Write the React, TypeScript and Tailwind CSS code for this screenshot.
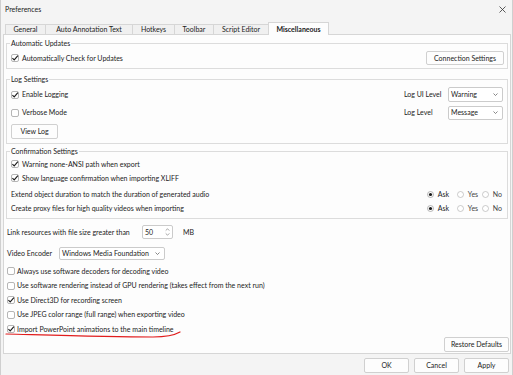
import React from "react";

function Check({ checked = false }: { checked?: boolean }) {
  return (
    <svg width="8" height="8" viewBox="0 0 8 8" className="shrink-0">
      <rect x="0.5" y="0.5" width="7" height="7" rx="1.5" fill="#ffffff" stroke="#a3a3a3" strokeWidth="0.8" />
      {checked && (
        <path d="M1.4 4.1 L3.2 5.9 L6.9 1.6" fill="none" stroke="#1c1c1c" strokeWidth="1.1" />
      )}
    </svg>
  );
}

function Radio({ on = false }: { on?: boolean }) {
  return (
    <svg width="7" height="7" viewBox="0 0 7 7" className="shrink-0">
      <circle cx="3.5" cy="3.5" r="3" fill="#ffffff" stroke={on ? "#9a9a9a" : "#b5b5b5"} strokeWidth="0.7" />
      {on && <circle cx="3.5" cy="3.5" r="1.6" fill="#1a1a1a" />}
    </svg>
  );
}

function Chevron() {
  return (
    <svg width="5" height="3" viewBox="0 0 5 3" className="shrink-0">
      <path d="M0.5 0.5 L2.5 2.5 L4.5 0.5" fill="none" stroke="#555" strokeWidth="0.7" />
    </svg>
  );
}

function Combo({ value, className }: { value: string; className: string }) {
  return (
    <div
      className={`flex items-center justify-between whitespace-nowrap rounded-[2px] border border-[#cbcbcb] bg-white pl-[2px] pr-[4px] ${className}`}
    >
      <span>{value}</span>
      <Chevron />
    </div>
  );
}

function Button({ label, className }: { label: string; className: string }) {
  return (
    <div
      className={`flex items-center justify-center whitespace-nowrap rounded-[2px] border border-[#d0d0d0] bg-[#fdfdfd] ${className}`}
    >
      {label}
    </div>
  );
}

function CheckRow({ label, checked }: { label: string; checked?: boolean }) {
  return (
    <div className="flex h-[14.5px] items-center gap-[2px] pl-[2px]">
      <Check checked={checked} />
      <span>{label}</span>
    </div>
  );
}

function Answer() {
  return (
    <div className="flex items-center">
      <div className="flex w-[30px] items-center gap-[4px]">
        <Radio on />
        <span>Ask</span>
      </div>
      <div className="flex w-[25px] items-center gap-[4px] text-[#444]">
        <Radio />
        <span>Yes</span>
      </div>
      <div className="flex items-center gap-[4px] text-[#444]">
        <Radio />
        <span>No</span>
      </div>
    </div>
  );
}

const tabs = [
  { label: "General", w: "w-[40px]" },
  { label: "Auto Annotation Text", w: "w-[87px]" },
  { label: "Hotkeys", w: "w-[42px]" },
  { label: "Toolbar", w: "w-[39px]" },
  { label: "Script Editor", w: "w-[55px]" },
];

export default function App() {
  return (
    <div className="relative flex h-[375px] w-[513px] flex-col overflow-hidden whitespace-nowrap border-x border-[#cfcfcf] bg-[#f4f4f4] font-[Lato,sans-serif] text-[7px] leading-none text-[#1b1b1b]">
      <div className="flex h-[19px] items-center justify-between pl-[4px] pr-[6px]">
        <span>Preferences</span>
        <svg width="7" height="7" viewBox="0 0 7 7">
          <path d="M0.5 0.5 L6.5 6.5 M6.5 0.5 L0.5 6.5" stroke="#333" strokeWidth="0.8" />
        </svg>
      </div>

      <div className="relative z-10 flex h-[15px] items-end pl-[4px]">
        {tabs.map((t) => (
          <div
            key={t.label}
            className={`flex h-[10px] items-center justify-center border-l border-t border-[#d6d6d6] bg-[#f0f0f0] ${t.w}`}
          >
            {t.label}
          </div>
        ))}
        <div className="-mb-px flex h-[13px] w-[61px] items-center justify-center border-x border-t border-[#d6d6d6] bg-[#fdfdfd] font-bold">
          Miscellaneous
        </div>
      </div>

      <div className="ml-[2px] mr-[1px] flex h-[320px] flex-col border border-[#d6d6d6] bg-[#fdfdfd]">
        <div className="flex flex-col px-[2px]">
          <fieldset className="mt-[3px] border border-[#dcdcdc] px-[4px] pb-[3px]">
            <legend className="-ml-[1px] px-[1px] leading-[10px]">Automatic Updates</legend>
            <div className="mt-[3px] flex h-[14px] items-center justify-between">
              <div className="flex items-center gap-[3px]">
                <Check checked />
                <span>Automatically Check for Updates</span>
              </div>
              <Button label="Connection Settings" className="mr-[-1px] h-[14px] w-[78px]" />
            </div>
          </fieldset>

          <fieldset className="mt-[5px] border border-[#dcdcdc] px-[4px] pb-[4px]">
            <legend className="-ml-[1px] px-[1px] leading-[10px]">Log Settings</legend>
            <div className="mt-[3px] flex h-[15px] items-center justify-between">
              <div className="flex items-center gap-[3px]">
                <Check checked />
                <span>Enable Logging</span>
              </div>
              <div className="flex items-center">
                <span className="w-[44px]">Log UI Level</span>
                <Combo value="Warning" className="h-[15px] w-[55px]" />
              </div>
            </div>
            <div className="mt-[3px] flex h-[15px] items-center justify-between">
              <div className="flex items-center gap-[3px]">
                <Check />
                <span>Verbose Mode</span>
              </div>
              <div className="flex items-center">
                <span className="w-[44px]">Log Level</span>
                <Combo value="Message" className="h-[14px] w-[55px]" />
              </div>
            </div>
            <Button label="View Log" className="mt-[4px] h-[15px] w-[47px]" />
          </fieldset>

          <fieldset className="mt-[2px] border border-[#dcdcdc] pl-[4px] pr-[5px] pb-[3px]">
            <legend className="-ml-[1px] px-[1px] leading-[10px]">Confirmation Settings</legend>
            <div className="mt-[1px] flex h-[14px] items-center gap-[3px]">
              <Check checked />
              <span>Warning none-ANSI path when export</span>
            </div>
            <div className="flex h-[14px] items-center gap-[3px]">
              <Check checked />
              <span>Show language confirmation when importing XLIFF</span>
            </div>
            <div className="mt-[2px] flex h-[14px] items-center justify-between">
              <span>Extend object duration to match the duration of generated audio</span>
              <Answer />
            </div>
            <div className="flex h-[14px] items-center justify-between">
              <span>Create proxy files for high quality videos when importing</span>
              <Answer />
            </div>
          </fieldset>
        </div>

        <div className="flex flex-col pl-[1px]">
          <div className="mt-[6px] flex h-[14px] items-center pl-[2px]">
            <span className="w-[135px]">Link resources with file size greater than</span>
            <div className="flex h-[14px] w-[31px] items-center justify-between rounded-[2px] border border-[#cbcbcb] bg-white pl-[2px] pr-[2px]">
              <span>50</span>
              <svg width="5" height="8" viewBox="0 0 5 8">
                <path d="M0.7 2.6 L2.5 0.8 L4.3 2.6 M0.7 5.4 L2.5 7.2 L4.3 5.4" fill="none" stroke="#666" strokeWidth="0.6" />
              </svg>
            </div>
            <span className="ml-[10px]">MB</span>
          </div>
          <div className="mt-[7px] flex h-[14px] items-center pl-[2px]">
            <span className="w-[52px]">Video Encoder</span>
            <Combo value="Windows Media Foundation" className="h-[13px] w-[106px]" />
          </div>
          <div className="mt-[4px] flex flex-col">
            <CheckRow label="Always use software decoders for decoding video" />
            <CheckRow label="Use software rendering instead of GPU rendering (takes effect from the next run)" />
            <CheckRow label="Use Direct3D for recording screen" checked />
            <CheckRow label="Use JPEG color range (full range) when exporting video" />
            <CheckRow label="Import PowerPoint animations to the main timeline" checked />
          </div>
        </div>

        <div className="mt-auto flex justify-end pb-[1px] pr-[1px]">
          <Button label="Restore Defaults" className="h-[15px] w-[65px]" />
        </div>
      </div>

      <div className="mt-[4px] flex justify-end gap-[5px] pr-[3px]">
        <Button label="OK" className="h-[15px] w-[45px]" />
        <Button label="Cancel" className="h-[15px] w-[45px]" />
        <Button label="Apply" className="h-[15px] w-[45px]" />
      </div>

      <svg
        className="pointer-events-none absolute left-[4px] top-[329px]"
        width="178"
        height="10"
        viewBox="0 0 178 10"
      >
        <path
          d="M1 5 C 40 6, 100 8, 148 8 C 160 8, 168 7, 175 3"
          fill="none"
          stroke="#e11d1d"
          strokeWidth="1.2"
          strokeLinecap="round"
        />
      </svg>
    </div>
  );
}
